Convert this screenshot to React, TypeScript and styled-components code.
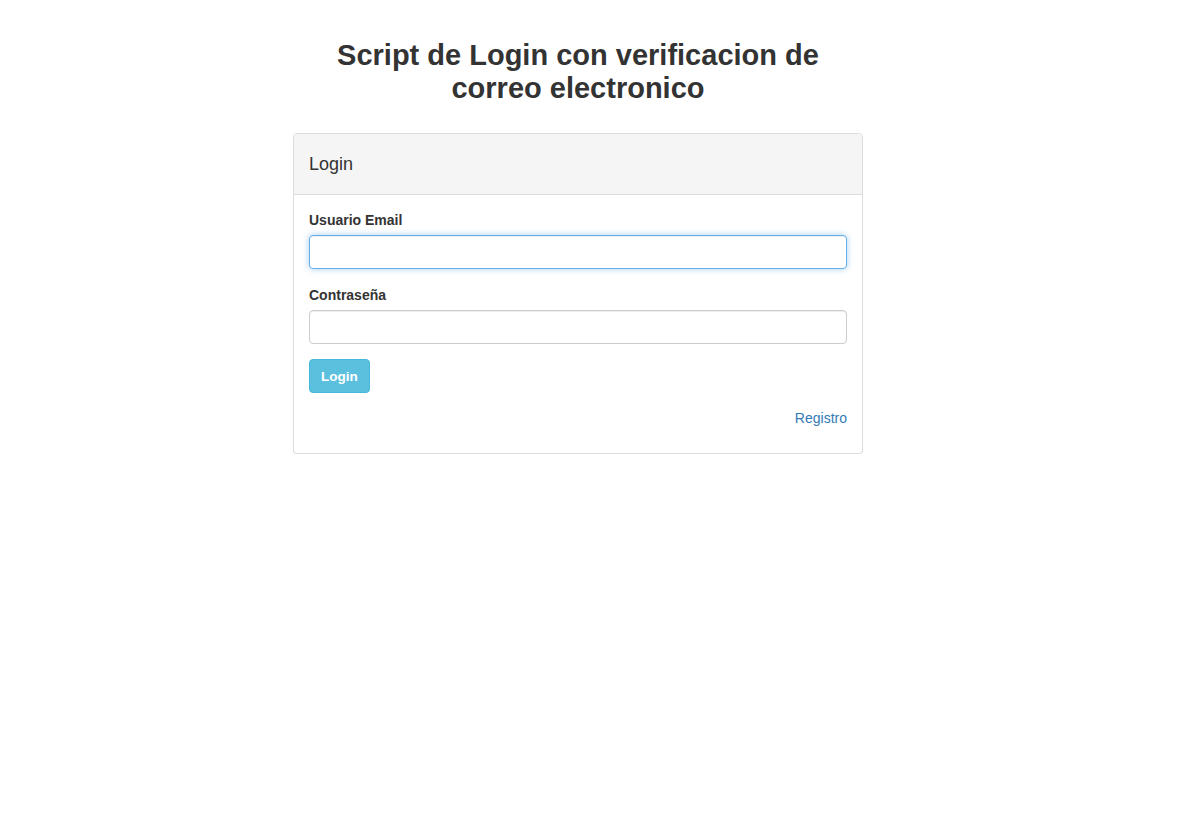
import React from "react";
import styled, { createGlobalStyle } from "styled-components";

const Global = createGlobalStyle`
  html, body { margin: 0; padding: 0; background: #fff; }
  body {
    font-family: "Liberation Sans", Arial, Helvetica, sans-serif;
    font-size: 14px;
    line-height: 1.42857;
    color: #333;
  }
  * { box-sizing: border-box; }
`;

const Column = styled.div`
  width: 570px;
  margin-left: 293px;
  padding-top: 39px;
`;

const Title = styled.h2`
  margin: 0 0 28px;
  font-size: 29px;
  line-height: 33px;
  font-weight: 700;
  text-align: center;
  color: #333;
  padding: 0 20px;
`;

const Panel = styled.div`
  border: 1px solid #ddd;
  border-radius: 4px;
  background: #fff;
  box-shadow: 0 1px 1px rgba(0, 0, 0, 0.05);
  overflow: hidden;
`;

const PanelHeading = styled.div`
  background: #f5f5f5;
  border-bottom: 1px solid #ddd;
  height: 61px;
  padding: 2px 15px 0;
  display: flex;
  align-items: center;
`;

const PanelTitle = styled.h3`
  margin: 0;
  font-size: 18px;
  font-weight: 500;
  color: #333;
`;

const PanelBody = styled.div`
  padding: 15px 15px 25px;
  display: flex;
  flex-direction: column;
`;

const FormGroup = styled.div<{ $gap?: number }>`
  margin-bottom: ${(p) => p.$gap ?? 15}px;
  display: flex;
  flex-direction: column;
`;

const Label = styled.label`
  font-weight: 700;
  font-size: 14px;
  line-height: 20px;
  margin-bottom: 5px;
`;

const Input = styled.input<{ $focused?: boolean }>`
  height: 34px;
  width: 100%;
  padding: 6px 12px;
  font-size: 14px;
  font-family: inherit;
  border: 1px solid ${(p) => (p.$focused ? "#66afe9" : "#ccc")};
  border-radius: 4px;
  outline: none;
  box-shadow: ${(p) =>
    p.$focused
      ? "inset 0 1px 1px rgba(0,0,0,.075), 0 0 6px rgba(102,175,233,.6)"
      : "inset 0 1px 1px rgba(0,0,0,.075)"};
`;

const Button = styled.button`
  align-self: flex-start;
  height: 34px;
  padding: 0 11px;
  font-family: inherit;
  font-size: 13.5px;
  font-weight: 700;
  color: #fff;
  background: #5bc0de;
  border: 1px solid #46b8da;
  border-radius: 4px;
  cursor: pointer;
`;

const LinkRow = styled.div`
  margin-top: 15px;
  display: flex;
  justify-content: flex-end;
  line-height: 20px;
`;

const Link = styled.a`
  color: #337ab7;
  text-decoration: none;
  font-size: 14px;
`;

export default function App() {
  return (
    <>
      <Global />
      <Column>
        <Title>Script de Login con verificacion de correo electronico</Title>
        <Panel>
          <PanelHeading>
            <PanelTitle>Login</PanelTitle>
          </PanelHeading>
          <PanelBody>
            <FormGroup $gap={16}>
              <Label>Usuario Email</Label>
              <Input type="email" $focused />
            </FormGroup>
            <FormGroup>
              <Label>Contraseña</Label>
              <Input type="password" />
            </FormGroup>
            <Button>Login</Button>
            <LinkRow>
              <Link href="#">Registro</Link>
            </LinkRow>
          </PanelBody>
        </Panel>
      </Column>
    </>
  );
}
